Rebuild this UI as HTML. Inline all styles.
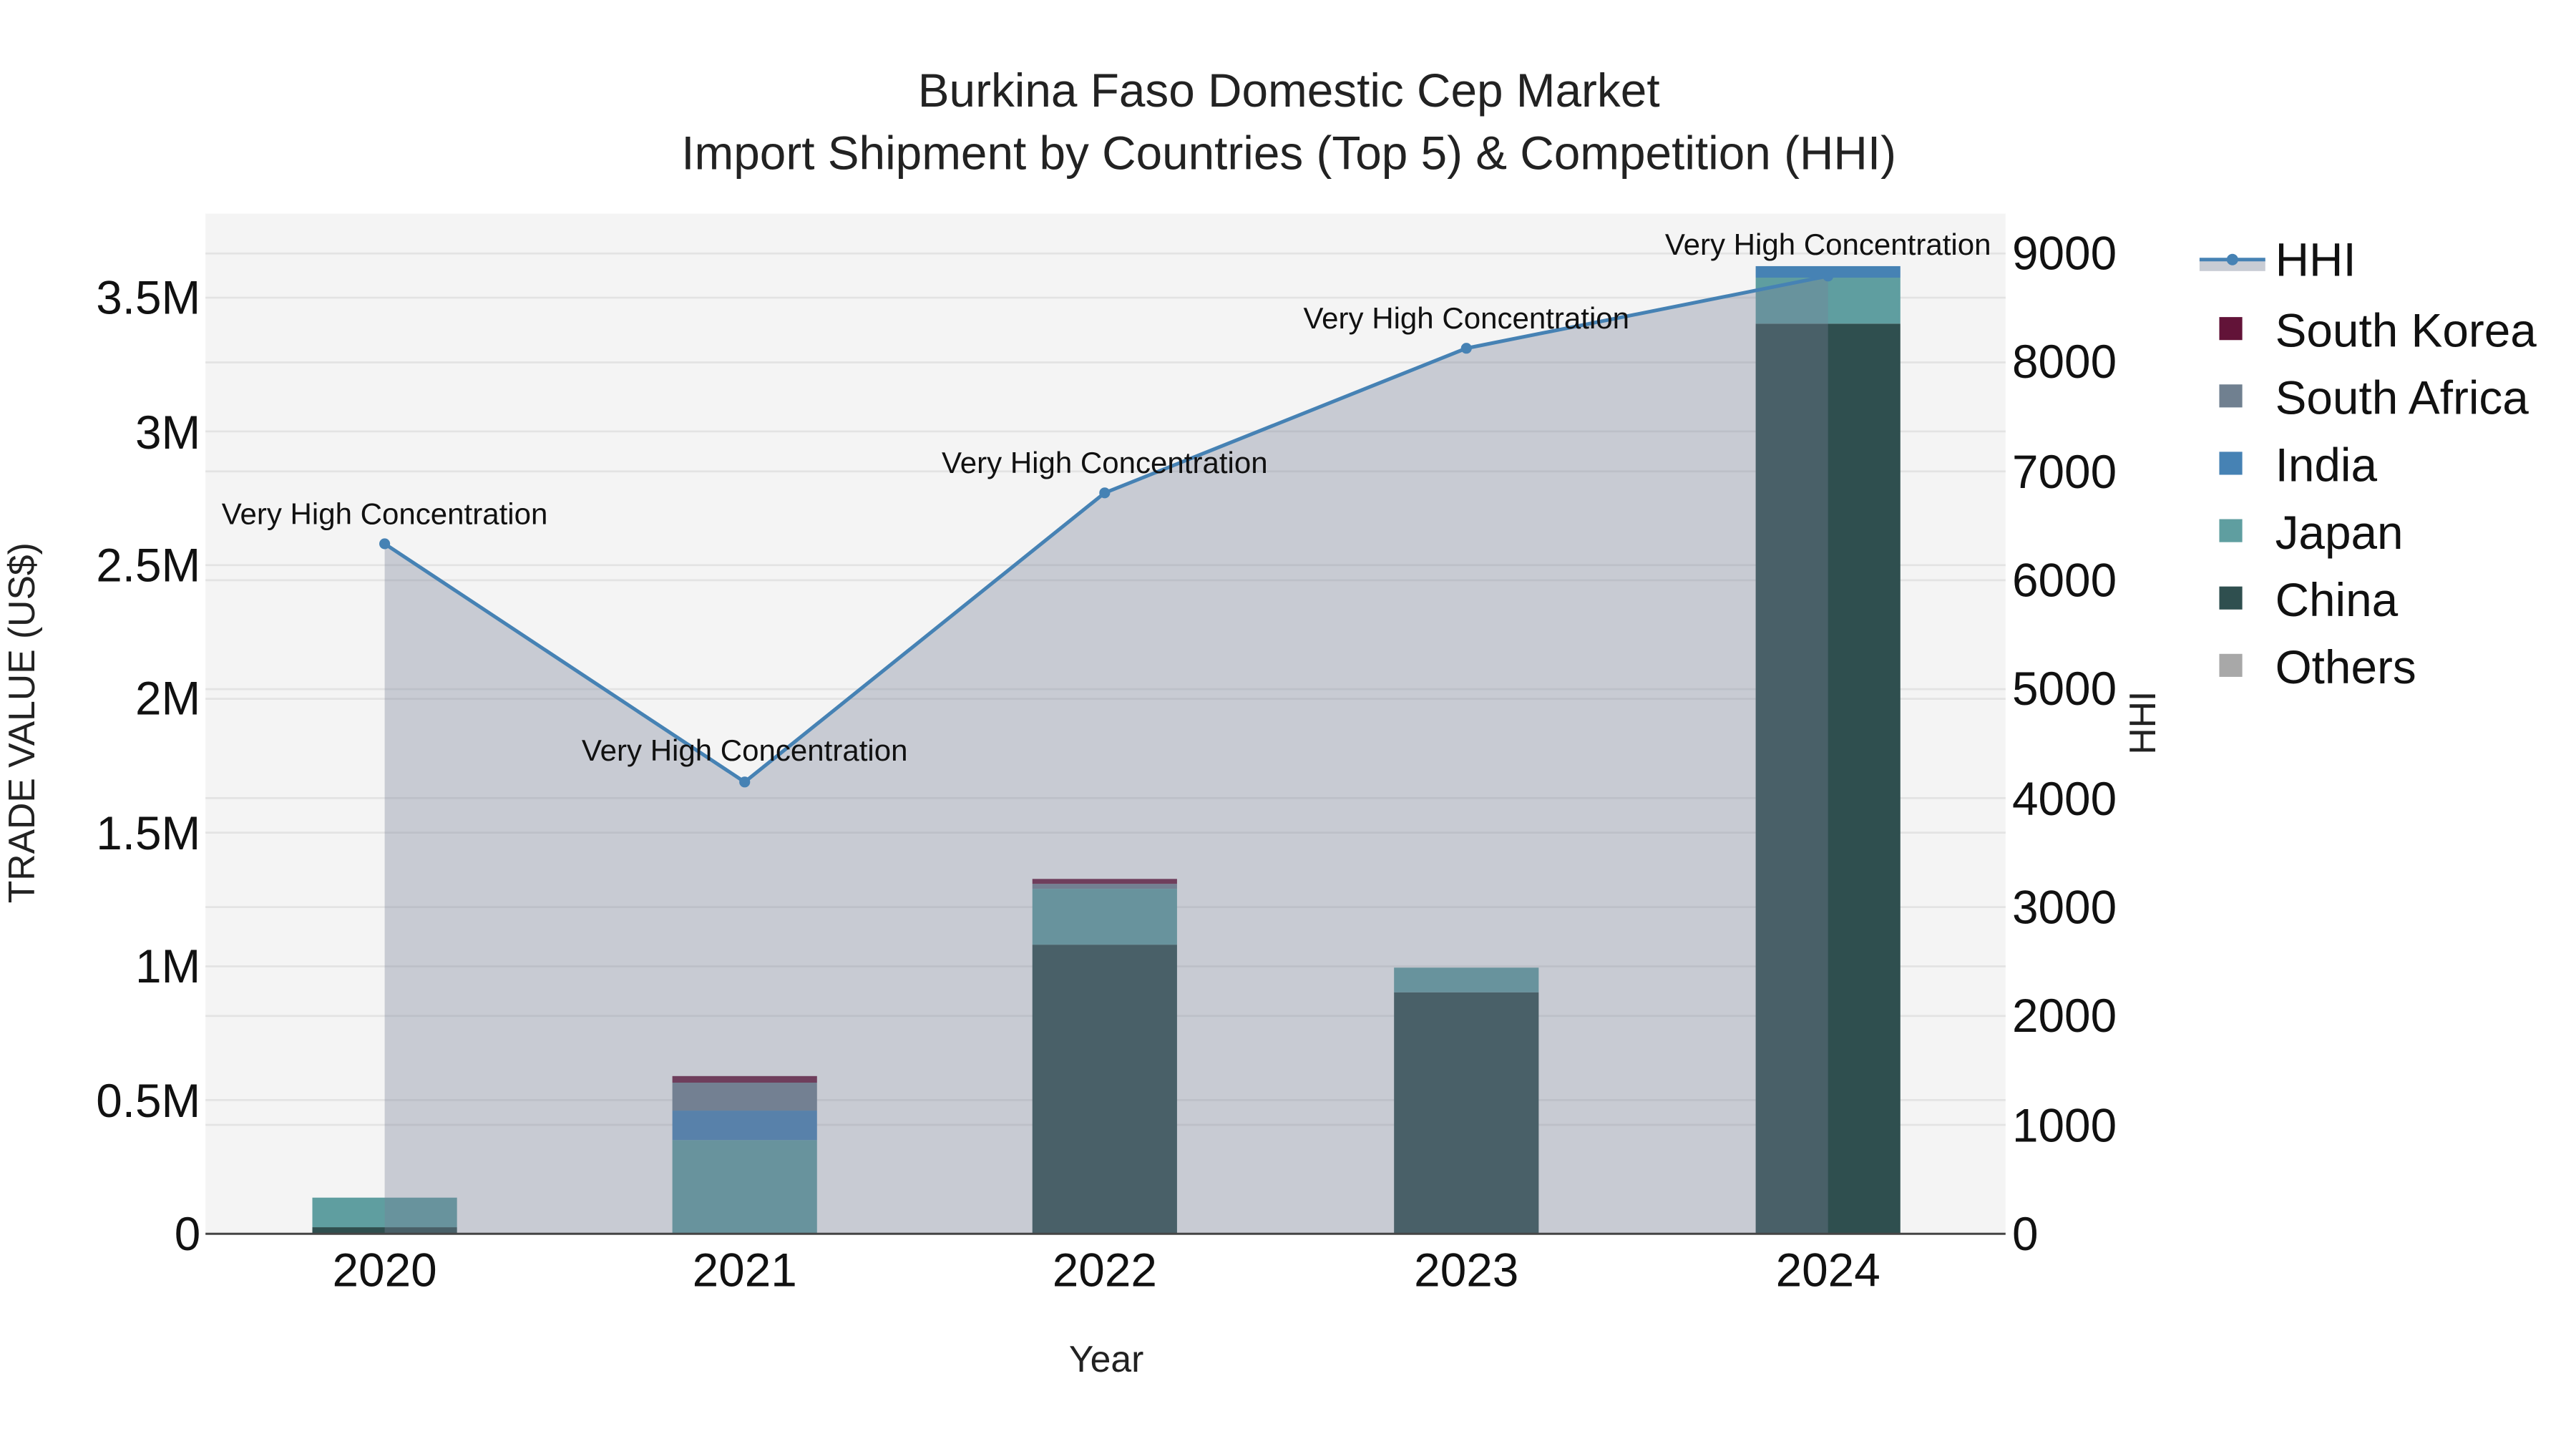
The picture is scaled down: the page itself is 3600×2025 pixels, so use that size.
<!DOCTYPE html>
<html><head><meta charset="utf-8"><style>
html,body{margin:0;padding:0;background:#fff;}
svg{display:block;font-family:"Liberation Sans",Arial,sans-serif;}
</style></head><body>
<svg width="3600" height="2025" viewBox="0 0 1567 882" preserveAspectRatio="none" xmlns="http://www.w3.org/2000/svg">
<rect x="0" y="0" width="1567" height="882" fill="#fff"/>
<text x="784" y="65" font-size="28.6" text-anchor="middle" fill="#222">Burkina Faso Domestic Cep Market</text>
<text x="784" y="103" font-size="28.6" text-anchor="middle" fill="#222">Import Shipment by Countries (Top 5) &amp; Competition (HHI)</text>
<rect x="125" y="130" width="1095" height="621" fill="#f4f4f4"/>
<g stroke="#e3e3e3" stroke-width="1.2">
<line x1="125" x2="1220" y1="669.6" y2="669.6"/><line x1="125" x2="1220" y1="588.2" y2="588.2"/><line x1="125" x2="1220" y1="506.8" y2="506.8"/><line x1="125" x2="1220" y1="425.4" y2="425.4"/><line x1="125" x2="1220" y1="344" y2="344"/><line x1="125" x2="1220" y1="262.6" y2="262.6"/><line x1="125" x2="1220" y1="181.2" y2="181.2"/>
<line x1="125" x2="1220" y1="684.7" y2="684.7"/><line x1="125" x2="1220" y1="618.4" y2="618.4"/><line x1="125" x2="1220" y1="552.1" y2="552.1"/><line x1="125" x2="1220" y1="485.8" y2="485.8"/><line x1="125" x2="1220" y1="419.5" y2="419.5"/><line x1="125" x2="1220" y1="353.2" y2="353.2"/><line x1="125" x2="1220" y1="286.9" y2="286.9"/><line x1="125" x2="1220" y1="220.6" y2="220.6"/><line x1="125" x2="1220" y1="154.3" y2="154.3"/>
</g>
<g>
<rect x="190" y="747" width="88" height="4" fill="#2f4f4f"/>
<rect x="190" y="729" width="88" height="18" fill="#5f9ea0"/>
<rect x="409" y="694" width="88" height="57" fill="#5f9ea0"/>
<rect x="409" y="676" width="88" height="18" fill="#4682b4"/>
<rect x="409" y="659" width="88" height="17" fill="#708090"/>
<rect x="409" y="655" width="88" height="4" fill="#6b1a3c"/>
<rect x="628" y="575" width="88" height="176" fill="#2f4f4f"/>
<rect x="628" y="541" width="88" height="34" fill="#5f9ea0"/>
<rect x="628" y="538" width="88" height="3" fill="#708090"/>
<rect x="628" y="535" width="88" height="3" fill="#6b1a3c"/>
<rect x="848" y="604" width="88" height="147" fill="#2f4f4f"/>
<rect x="848" y="589" width="88" height="15" fill="#5f9ea0"/>
<rect x="1068" y="197" width="88" height="554" fill="#2f4f4f"/>
<rect x="1068" y="169" width="88" height="28" fill="#5f9ea0"/>
<rect x="1068" y="162" width="88" height="7" fill="#4682b4"/>
</g>
<polygon points="234,751 234,331 453,476 672,300 892,212 1112,168 1112,751" fill="rgba(120,128,150,0.355)"/>
<polyline points="234,331 453,476 672,300 892,212 1112,168" fill="none" stroke="#4682b4" stroke-width="2.2"/>
<g fill="#4682b4"><circle cx="234" cy="331" r="3.3"/><circle cx="453" cy="476" r="3.3"/><circle cx="672" cy="300" r="3.3"/><circle cx="892" cy="212" r="3.3"/><circle cx="1112" cy="168" r="3.3"/></g>
<line x1="125" x2="1220" y1="751" y2="751" stroke="#444" stroke-width="1.3"/>
<g font-size="18.3" text-anchor="middle" fill="#111">
<text x="234" y="319">Very High Concentration</text>
<text x="453" y="463">Very High Concentration</text>
<text x="672" y="288">Very High Concentration</text>
<text x="892" y="200">Very High Concentration</text>
<text x="1112" y="155">Very High Concentration</text>
</g>
<g font-size="28.6" text-anchor="end" fill="#111">
<text x="122" y="761">0</text><text x="122" y="680">0.5M</text><text x="122" y="598">1M</text><text x="122" y="517">1.5M</text><text x="122" y="435">2M</text><text x="122" y="354">2.5M</text><text x="122" y="273">3M</text><text x="122" y="191">3.5M</text>
</g>
<g font-size="28.6" text-anchor="start" fill="#111">
<text x="1224" y="761">0</text><text x="1224" y="695">1000</text><text x="1224" y="628">2000</text><text x="1224" y="562">3000</text><text x="1224" y="496">4000</text><text x="1224" y="429">5000</text><text x="1224" y="363">6000</text><text x="1224" y="297">7000</text><text x="1224" y="230">8000</text><text x="1224" y="164">9000</text>
</g>
<g font-size="28.6" text-anchor="middle" fill="#111">
<text x="234" y="783">2020</text><text x="453" y="783">2021</text><text x="672" y="783">2022</text><text x="892" y="783">2023</text><text x="1112" y="783">2024</text>
</g>
<text x="673" y="835" font-size="22.5" text-anchor="middle" fill="#222">Year</text>
<text transform="translate(21,440) rotate(-90)" font-size="22.5" text-anchor="middle" fill="#222">TRADE VALUE (US$)</text>
<text transform="translate(1311,440) rotate(-90)" font-size="22.5" text-anchor="middle" fill="#222">HHI</text>
<rect x="1338" y="158" width="40" height="7" fill="#c8ccd4"/>
<line x1="1338" x2="1378" y1="158" y2="158" stroke="#4682b4" stroke-width="2.2"/>
<circle cx="1358" cy="158" r="3.5" fill="#4682b4"/>
<g font-size="28.6" fill="#111">
<text x="1384" y="168">HHI</text>
<text x="1384" y="211">South Korea</text>
<text x="1384" y="252">South Africa</text>
<text x="1384" y="293">India</text>
<text x="1384" y="334">Japan</text>
<text x="1384" y="375">China</text>
<text x="1384" y="416">Others</text>
</g>
<rect x="1350" y="193" width="14" height="14" fill="#621338"/>
<rect x="1350" y="234" width="14" height="14" fill="#708090"/>
<rect x="1350" y="275" width="14" height="14" fill="#4682b4"/>
<rect x="1350" y="316" width="14" height="14" fill="#5f9ea0"/>
<rect x="1350" y="357" width="14" height="14" fill="#2f4f4f"/>
<rect x="1350" y="398" width="14" height="14" fill="#a8a8a8"/>
</svg>
</body></html>
